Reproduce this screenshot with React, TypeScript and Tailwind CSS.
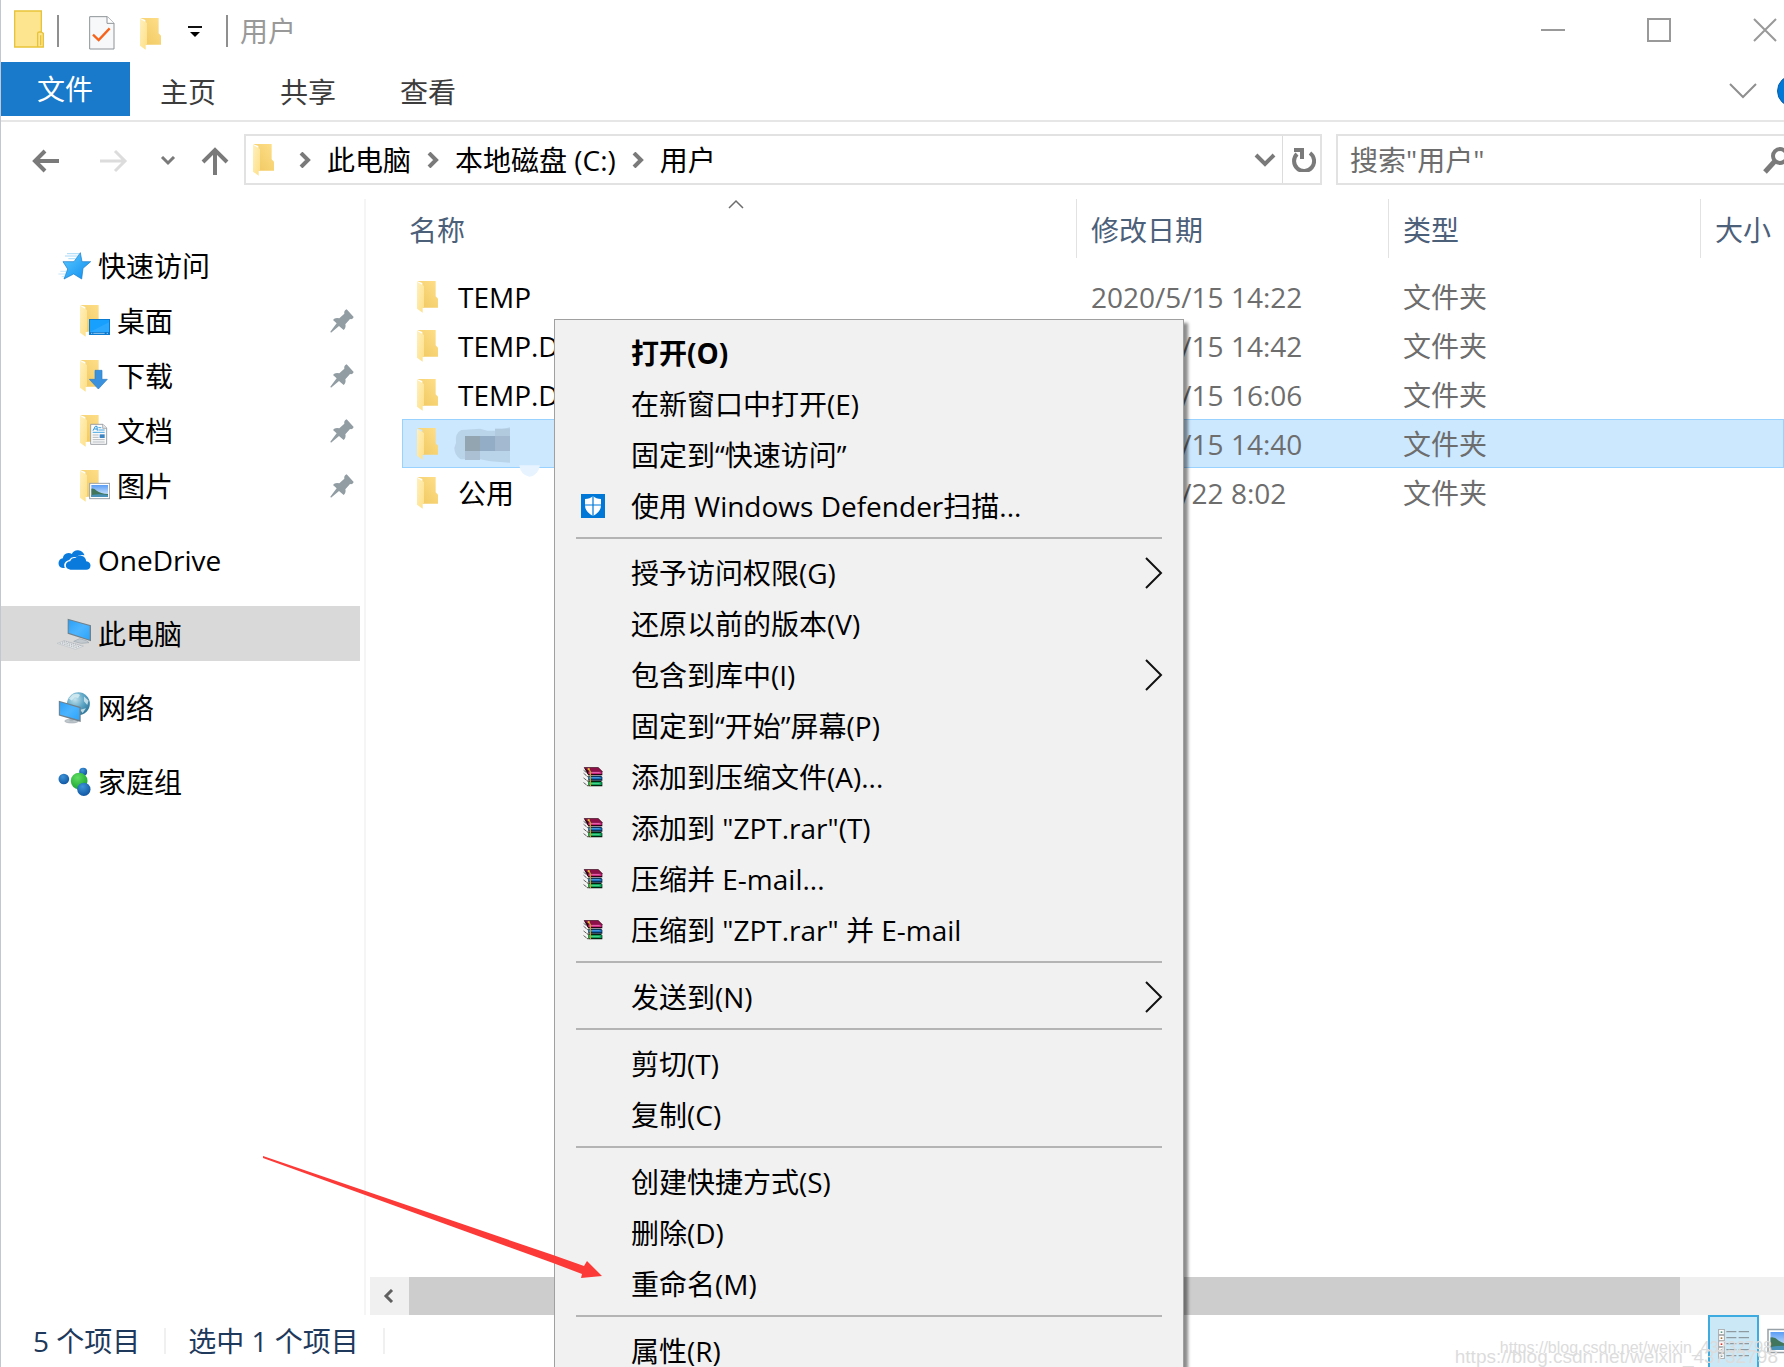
import type { ReactNode } from "react";
import clsx from "clsx";

type Entry = {
  name: string;
  date: string;
  selected?: boolean;
  masked?: boolean;
};

type MenuItem = {
  label: string;
  icon?: "defender" | "rar";
  bold?: boolean;
  submenu?: boolean;
};

const entries: Entry[] = [
  { name: "TEMP", date: "2020/5/15 14:22" },
  { name: "TEMP.D", date: "2020/5/15 14:42" },
  { name: "TEMP.D", date: "2020/5/15 16:06" },
  { name: "", date: "2020/5/15 14:40", selected: true, masked: true },
  { name: "公用", date: "2020/5/22 8:02" },
];

const menuGroups: MenuItem[][] = [
  [
    { label: "打开(O)", bold: true },
    { label: "在新窗口中打开(E)" },
    { label: "固定到“快速访问”" },
    { label: "使用 Windows Defender扫描...", icon: "defender" },
  ],
  [
    { label: "授予访问权限(G)", submenu: true },
    { label: "还原以前的版本(V)" },
    { label: "包含到库中(I)", submenu: true },
    { label: "固定到“开始”屏幕(P)" },
    { label: "添加到压缩文件(A)...", icon: "rar" },
    { label: '添加到 "ZPT.rar"(T)', icon: "rar" },
    { label: "压缩并 E-mail...", icon: "rar" },
    { label: '压缩到 "ZPT.rar" 并 E-mail', icon: "rar" },
  ],
  [{ label: "发送到(N)", submenu: true }],
  [{ label: "剪切(T)" }, { label: "复制(C)" }],
  [{ label: "创建快捷方式(S)" }, { label: "删除(D)" }, { label: "重命名(M)" }],
  [{ label: "属性(R)" }],
];

/* shared gradients, referenced by id from the icons below */
function Gradients() {
  return (
    <svg className="absolute size-0" aria-hidden>
      <defs>
        <linearGradient id="folderBack" x1="0" y1="1" x2="1" y2="0">
          <stop offset="0" stopColor="#f0c75e" />
          <stop offset="1" stopColor="#fedf8a" />
        </linearGradient>
        <linearGradient id="folderFlap" x1="0" y1="0" x2="1" y2="1">
          <stop offset="0" stopColor="#fff0bd" />
          <stop offset="1" stopColor="#fddf86" />
        </linearGradient>
        <linearGradient id="screen" x1="0" y1="0" x2="1" y2="1">
          <stop offset="0" stopColor="#2c9ff5" />
          <stop offset="0.5" stopColor="#4db5ff" />
          <stop offset="1" stopColor="#2ba4fb" />
        </linearGradient>
        <linearGradient id="star" x1="0" y1="0" x2="1" y2="1">
          <stop offset="0" stopColor="#5ccbff" />
          <stop offset="1" stopColor="#0d8cf0" />
        </linearGradient>
        <radialGradient id="globe" cx="0.35" cy="0.3" r="0.8">
          <stop offset="0" stopColor="#c3e2ec" />
          <stop offset="0.5" stopColor="#5fa7c6" />
          <stop offset="1" stopColor="#276f95" />
        </radialGradient>
        <radialGradient id="blueBall" cx="0.4" cy="0.3" r="0.8">
          <stop offset="0" stopColor="#3c93d8" />
          <stop offset="1" stopColor="#0b4f9c" />
        </radialGradient>
        <radialGradient id="greenBall" cx="0.4" cy="0.3" r="0.8">
          <stop offset="0" stopColor="#5fdc62" />
          <stop offset="1" stopColor="#12a02a" />
        </radialGradient>
        <linearGradient id="sky" x1="0" y1="0" x2="0" y2="1">
          <stop offset="0" stopColor="#5b9df5" />
          <stop offset="1" stopColor="#e4f3fd" />
        </linearGradient>
      </defs>
    </svg>
  );
}

function FolderShape() {
  return (
    <>
      <path d="M0 0H56V46L63 53V80H16V6Z" fill="url(#folderBack)" />
      <path d="M0 2L21 15V79L17 80V95L0 83Z" fill="url(#folderFlap)" />
    </>
  );
}

function FolderIcon() {
  return (
    <svg className="h-8 w-[22px] shrink-0" viewBox="0 0 66 96" aria-hidden>
      <FolderShape />
    </svg>
  );
}

function BadgedFolder({ children }: { children: ReactNode }) {
  return (
    <svg className="h-8 w-[30px]" viewBox="0 0 90 96" aria-hidden>
      <FolderShape />
      {children}
    </svg>
  );
}

function DesktopIcon() {
  return (
    <BadgedFolder>
      <rect x="27" y="42" width="63" height="48" fill="#0b7ad1" />
      <rect x="30" y="45" width="57" height="36" fill="#18a0ff" />
      <path d="M30 81L87 52V81Z" fill="#3fb1ff" opacity="0.5" />
      <path d="M33 85h4M40 85h34M80 85h4" stroke="#e6f4ff" strokeWidth="2" />
    </BadgedFolder>
  );
}

function DownloadsIcon() {
  return (
    <BadgedFolder>
      <path d="M45 31H66V58H82L55 87L28 58H45Z" fill="#3a92df" stroke="#2c7cc6" strokeWidth="2" />
    </BadgedFolder>
  );
}

function DocumentsIcon() {
  return (
    <BadgedFolder>
      <path d="M32 28H69L80 39V88H32Z" fill="#fbfbfb" stroke="#8c9196" strokeWidth="2.5" />
      <path d="M68 28V40H80" fill="#e4e6e8" stroke="#8c9196" strokeWidth="2" />
      <path d="M39 47L46 34H51L52 47M43 42H51" fill="none" stroke="#2594dd" strokeWidth="3" />
      <path d="M55 38H64M55 45H74M38 52H74" stroke="#2594dd" strokeWidth="2.5" />
      <path d="M38 60H56M38 67H56M38 74H74M38 81H74" stroke="#a5abb1" strokeWidth="2.5" />
      <rect x="59" y="58" width="15" height="11" fill="#3e85c4" />
    </BadgedFolder>
  );
}

function PhotoShape() {
  return (
    <>
      <rect x="29" y="40" width="60" height="46" fill="#fff" stroke="#98a1a8" strokeWidth="3" />
      <rect x="34" y="45" width="50" height="36" fill="url(#sky)" />
      <path d="M34 56Q42 54 50 62Q62 70 84 72V81H34Z" fill="#41765c" />
      <path d="M34 75Q58 70 84 75V81H34Z" fill="#4a91b8" />
    </>
  );
}

function PicturesIcon() {
  return (
    <BadgedFolder>
      <PhotoShape />
    </BadgedFolder>
  );
}

function QuickAccessIcon() {
  return (
    <svg className="h-7 w-[34px]" viewBox="0 0 102 84" aria-hidden>
      <path
        d="M70 2L75 29H101L78 49L74 81L50 66L21 81L32 51L18 29H51Z"
        fill="url(#star)"
        stroke="#1479c9"
        strokeWidth="2"
      />
      <path d="M30 5H66M24 12H62M34 20H56" stroke="#7cc6f3" strokeWidth="2" />
      <path d="M4 66H26M10 58H28M14 74H22" stroke="#a9d9f7" strokeWidth="2" />
    </svg>
  );
}

function OneDriveIcon() {
  return (
    <svg className="h-5 w-[33px]" viewBox="0 0 98 60" aria-hidden>
      <path
        d="M20 54H14Q1 52 1 39Q2 27 14 25Q16 10 31 9Q37 9 41 12Q47 0 60 1Q74 2 79 16Q64 12 54 22Q40 18 33 30Q20 34 18 44Q18 50 20 54Z"
        fill="#0a7bdc"
      />
      <path
        d="M37 59Q23 57 23 46Q24 35 36 34Q40 22 52 24Q60 14 72 18Q83 22 84 34Q97 36 97 47Q96 59 84 59Z"
        fill="#0a7bdc"
      />
    </svg>
  );
}

function ComputerIcon() {
  return (
    <svg className="h-8 w-9" viewBox="0 0 106 96" aria-hidden>
      <path d="M2 76L24 68L82 84L58 94Z" fill="#e4e7e9" stroke="#b5bbc0" strokeWidth="1.5" />
      <path
        d="M10 75L64 90M17 72L71 87M22 69L78 84"
        stroke="#a3abb1"
        strokeWidth="2.5"
        strokeDasharray="4 3"
      />
      <path d="M52 70Q72 80 98 74L90 68L70 62Z" fill="#c4cbd0" stroke="#8f9aa2" strokeWidth="1.5" />
      <path d="M34 2L104 22V70L34 47Z" fill="#71808a" />
      <path d="M37 6L100 24V65L37 44Z" fill="url(#screen)" />
    </svg>
  );
}

function NetworkIcon() {
  return (
    <svg className="h-8 w-[33px]" viewBox="0 0 98 98" aria-hidden>
      <circle cx="61" cy="36" r="35" fill="url(#globe)" />
      <path
        d="M44 8Q58 2 66 9L60 18L50 16L40 26L32 20ZM78 14L92 26L88 40L78 28ZM66 54L84 50L74 64Z"
        fill="#d9edf2"
        opacity="0.8"
      />
      <ellipse cx="40" cy="89" rx="21" ry="6" fill="#bfc8cd" stroke="#8f9aa2" strokeWidth="1.5" />
      <path d="M34 76H46V90H34Z" fill="#a9b4ba" />
      <path d="M1 27L68 46V92L1 72Z" fill="#71808a" />
      <path d="M4 31L64 49V86L4 69Z" fill="url(#screen)" />
    </svg>
  );
}

function HomegroupIcon() {
  return (
    <svg className="h-[30px] w-[33px]" viewBox="0 0 98 90" aria-hidden>
      <circle cx="17" cy="36" r="16" fill="url(#blueBall)" />
      <circle cx="75" cy="14" r="12" fill="url(#blueBall)" />
      <circle cx="63" cy="42" r="25" fill="url(#greenBall)" />
      <circle cx="77" cy="67" r="20" fill="url(#blueBall)" />
    </svg>
  );
}

function PinIcon() {
  return (
    <svg className="size-6" viewBox="0 0 72 72" aria-hidden>
      <path
        d="M50 1L71 24Q69 32 60 30L46 46Q49 56 41 63L27 51L3 71L1 68L20 43L9 33Q14 25 28 28L43 14Q41 5 50 1Z"
        fill="#919ca3"
      />
    </svg>
  );
}

function DefenderIcon() {
  return (
    <svg className="size-6" viewBox="0 0 24 24" aria-hidden>
      <rect width="24" height="24" fill="#0078d7" />
      <path d="M12 2Q15 5 20 5V11Q20 18 12 22Q4 18 4 11V5Q9 5 12 2Z" fill="#fff" />
      <path d="M12 2V22M3 11H21" stroke="#0078d7" strokeWidth="1.2" />
    </svg>
  );
}

function RarIcon() {
  return (
    <svg className="size-5" viewBox="0 0 60 60" aria-hidden>
      {/* page edges */}
      <path d="M2 4L16 14V58L2 48Z" fill="#f4f4f4" />
      <path d="M2 10L16 21M2 19L16 31M2 33L16 44M2 47L16 58" stroke="#2a2a2a" strokeWidth="3" strokeDasharray="4 2" />
      {/* covers */}
      <path d="M2 1H46L58 13V25H16Z" fill="#2b0313" />
      <path d="M4 2H46L56 12H16Z" fill="#8e1048" />
      <path d="M16 13H56V21H16Z" fill="#c9287f" />
      <path d="M22 16H50V18H22Z" fill="#f07cb8" />
      <path d="M16 26H54L58 30V41H16Z" fill="#04182f" />
      <path d="M16 29H56V37H16Z" fill="#1c6fb8" />
      <path d="M22 31H50V33H22Z" fill="#59acec" />
      <path d="M16 42H54L58 46V58H16Z" fill="#03230f" />
      <path d="M16 45H56V54H16Z" fill="#12a35a" />
      <path d="M22 48H50V50H22Z" fill="#5fe6a0" />
      {/* strap */}
      <path d="M16 5L22 14V57" fill="none" stroke="#c9a21f" strokeWidth="4" />
      <path d="M14 4H20V8H14Z" fill="#f2dc3a" />
    </svg>
  );
}

/* pixelated smear that hides the name of the selected folder */
function MaskedName() {
  return (
    <svg className="absolute top-[7px] left-[52px] h-[52px] w-[90px]" viewBox="0 0 270 156" aria-hidden>
      <path
        d="M22 12L78 8L100 14L124 14L168 4V110L110 106L78 100L20 100Q1 88 1 66L6 50Q2 22 22 12Z"
        fill="#b9d3e8"
      />
      <rect x="33" y="75" width="45" height="27" fill="#abc0d2" />
      <rect x="123" y="8" width="45" height="22" fill="#b1cade" />
      <rect x="33" y="30" width="45" height="45" fill="#94a5b2" />
      <rect x="78" y="30" width="45" height="45" fill="#93adc7" />
      <rect x="123" y="30" width="45" height="45" fill="#a3b9cf" />
      <path d="M196 118H258Q252 150 226 152Q200 148 196 118Z" fill="#e7f3fe" />
    </svg>
  );
}

function Chevron({ direction }: { direction: "right" | "down" }) {
  return direction === "right" ? (
    <svg className="h-4 w-3 shrink-0" viewBox="0 0 12 16" aria-hidden>
      <path d="M2 1L9 8L2 15" fill="none" stroke="#7a7a7a" strokeWidth="4" />
    </svg>
  ) : (
    <svg className="h-[14px] w-[22px]" viewBox="0 0 22 14" aria-hidden>
      <path d="M2 2L11 11L20 2" fill="none" stroke="#7a7a7a" strokeWidth="4" />
    </svg>
  );
}

function TitleBar() {
  return (
    <header className="flex h-[62px] shrink-0 items-center pl-[13px]">
      <svg className="-mt-1 h-[38px] w-[30px]" viewBox="0 0 90 114" aria-hidden>
        <path d="M2 3H82V66L88 70V111H2Z" fill="#fde48f" stroke="#e8c33a" strokeWidth="4" />
        <path d="M71 111V70Q71 66 76 66H84M80 76V106" fill="none" stroke="#e8c33a" strokeWidth="4" />
      </svg>
      <span className="ml-[13px] h-8 w-[2px] bg-[#8f8f8f]" />
      <button type="button" aria-label="属性" className="ml-[30px]">
        <svg className="mt-1 h-[34px] w-[26px]" viewBox="0 0 78 102" aria-hidden>
          <path d="M2 2H55L75 22V99H2Z" fill="#f7f8f9" stroke="#8e9397" strokeWidth="3" />
          <path d="M54 2V22H75" fill="#fff" stroke="#8e9397" strokeWidth="3" />
          <path d="M12 56L29 72L62 37" fill="none" stroke="#f7631b" strokeWidth="7" />
        </svg>
      </button>
      <button type="button" aria-label="新建文件夹" className="mt-[6px] ml-[25px]">
        <FolderIcon />
      </button>
      <button type="button" aria-label="自定义快速访问工具栏" className="mt-[2px] ml-[26px]">
        <svg className="h-3 w-[14px]" viewBox="0 0 14 12" aria-hidden>
          <path d="M0 1H14" stroke="#111" strokeWidth="2" />
          <path d="M2 6H12L7 11Z" fill="#000" />
        </svg>
      </button>
      <span className="ml-6 h-8 w-[2px] bg-[#8f8f8f]" />
      <h1 className="ml-3 text-[#999]">用户</h1>
      <div className="ml-auto flex items-center gap-[82px] pr-[7px] pb-[3px]">
        <button type="button" aria-label="最小化" className="flex h-6 w-6 items-center">
          <span className="h-[2px] w-full bg-[#999]" />
        </button>
        <button type="button" aria-label="最大化" className="h-6 w-6 border-2 border-[#999]" />
        <button type="button" aria-label="关闭">
          <svg className="size-6" viewBox="0 0 24 24" aria-hidden>
            <path d="M1 1L23 23M23 1L1 23" stroke="#999" strokeWidth="2" />
          </svg>
        </button>
      </div>
    </header>
  );
}

function Ribbon() {
  return (
    <div className="flex h-[60px] shrink-0 items-start border-b-2 border-[#e6e6e6]">
      <button type="button" className="-ml-px h-[54px] w-[130px] bg-[#1979ca] text-white">
        文件
      </button>
      <div className="-ml-[2px] flex">
        {["主页", "共享", "查看"].map((tab) => (
          <button key={tab} type="button" className="h-[60px] w-[120px] text-[#3c3c3c]">
            {tab}
          </button>
        ))}
      </div>
      <div className="-mr-[25px] ml-auto flex h-[58px] items-center gap-5">
        <button type="button" aria-label="展开功能区">
          <svg className="h-4 w-7" viewBox="0 0 28 16" aria-hidden>
            <path d="M1 1L14 14L27 1" fill="none" stroke="#8f8f8f" strokeWidth="2" />
          </svg>
        </button>
        <button type="button" aria-label="帮助" className="size-8 rounded-full border border-[#0a5ea8] bg-[#0078d7]" />
      </div>
    </div>
  );
}

function AddressRow() {
  return (
    <div className="flex h-[77px] shrink-0 items-start pt-3 pl-[31px]">
      <div className="flex h-[54px] items-center">
        <button type="button" aria-label="后退">
          <svg className="h-6 w-7" viewBox="0 0 28 24" aria-hidden>
            <path d="M27 12H4M13 2L3 12L13 22" fill="none" stroke="#7a7a7a" strokeWidth="4" />
          </svg>
        </button>
        <button type="button" aria-label="前进" className="ml-10">
          <svg className="h-6 w-7" viewBox="0 0 28 24" aria-hidden>
            <path d="M0 12H24M15 2L25 12L15 22" fill="none" stroke="#dcdcdc" strokeWidth="3" />
          </svg>
        </button>
        <button type="button" aria-label="最近浏览的位置" className="ml-8">
          <svg className="h-[10px] w-4" viewBox="0 0 16 10" aria-hidden>
            <path d="M2 1L8 7L14 1" fill="none" stroke="#7a7a7a" strokeWidth="3" />
          </svg>
        </button>
        <button type="button" aria-label="上移" className="ml-[25px]">
          <svg className="h-[30px] w-7" viewBox="0 0 28 30" aria-hidden>
            <path d="M14 29V4M2 16L14 4L26 16" fill="none" stroke="#7a7a7a" strokeWidth="4" />
          </svg>
        </button>
      </div>
      <div className="ml-[15px] flex h-[51px] min-w-0 flex-1 items-center border-2 border-[#e2e2e2] pl-[7px]">
        <FolderIcon />
        <nav aria-label="地址" className="ml-6 flex items-center gap-4 whitespace-nowrap text-black">
          {["此电脑", "本地磁盘 (C:)", "用户"].map((part) => (
            <span key={part} className="flex items-center gap-4">
              <Chevron direction="right" />
              <a href="#">{part}</a>
            </span>
          ))}
        </nav>
        <button type="button" aria-label="以前的位置" className="mr-[6px] ml-auto">
          <Chevron direction="down" />
        </button>
        <button
          type="button"
          aria-label="刷新"
          className="flex h-full w-[38px] items-center justify-center border-l border-[#dcdcdc] pl-1"
        >
          <svg className="size-6" viewBox="0 0 24 24" aria-hidden>
            <path d="M18 5A10 10 0 1 1 5 6" fill="none" stroke="#7a7a7a" strokeWidth="4" />
            <path d="M2 0H12V11H8V4H2Z" fill="#7a7a7a" />
          </svg>
        </button>
      </div>
      <label className="ml-[14px] flex h-[51px] w-[448px] shrink-0 items-center border-2 border-r-0 border-[#e2e2e2] pl-3">
        <input
          type="search"
          aria-label="搜索"
          placeholder={'搜索"用户"'}
          className="min-w-0 flex-1 outline-none placeholder:text-[#6d6d6d]"
        />
        <svg className="-mr-[7px] h-7 w-7 shrink-0" viewBox="0 0 28 28" aria-hidden>
          <circle cx="17" cy="10" r="7" fill="none" stroke="#7a7a7a" strokeWidth="4" />
          <path d="M12 15L2 26" stroke="#7a7a7a" strokeWidth="5" />
        </svg>
      </label>
    </div>
  );
}

function SideItem({
  icon,
  label,
  pinned,
  selected,
  spaced,
}: {
  icon: ReactNode;
  label: string;
  pinned?: boolean;
  selected?: boolean;
  spaced?: boolean;
}) {
  return (
    <li className={clsx("mr-1", spaced && "mt-[19px]")}>
      <a
        href="#"
        className={clsx(
          "flex h-[55px] items-center",
          pinned ? "gap-[7px] pl-[79px]" : "gap-[6px] pl-[55px]",
          selected && "bg-[#d9d9d9]",
        )}
      >
        <span className={clsx("flex shrink-0 justify-center", pinned ? "w-[30px]" : "w-9")}>{icon}</span>
        <span>{label}</span>
        {pinned ? (
          <span className="mr-[6px] ml-auto">
            <PinIcon />
          </span>
        ) : null}
      </a>
    </li>
  );
}

function Sidebar() {
  return (
    <aside className="w-[365px] shrink-0 border-r-2 border-[#f5f5f5] pt-[39px] text-black">
      <ul>
        <SideItem icon={<QuickAccessIcon />} label="快速访问" />
        <SideItem icon={<DesktopIcon />} label="桌面" pinned />
        <SideItem icon={<DownloadsIcon />} label="下载" pinned />
        <SideItem icon={<DocumentsIcon />} label="文档" pinned />
        <SideItem icon={<PicturesIcon />} label="图片" pinned />
        <SideItem icon={<OneDriveIcon />} label="OneDrive" spaced />
        <SideItem icon={<ComputerIcon />} label="此电脑" spaced selected />
        <SideItem icon={<NetworkIcon />} label="网络" spaced />
        <SideItem icon={<HomegroupIcon />} label="家庭组" spaced />
      </ul>
    </aside>
  );
}

function FileTable() {
  const headers = ["名称", "修改日期", "类型", "大小"];
  return (
    <table className="w-full table-fixed border-collapse text-left whitespace-nowrap">
      <colgroup>
        <col className="w-[675px]" />
        <col className="w-[312px]" />
        <col className="w-[312px]" />
        <col />
      </colgroup>
      <thead>
        <tr>
          {headers.map((header, i) => (
            <th key={header} scope="col" className="relative h-[73px] p-0 align-top font-normal text-[#4c607a]">
              <div
                className={clsx(
                  "flex h-[59px] items-center pt-[2px]",
                  i === 0 ? "pl-[7px]" : "pl-[14px]",
                  i < 3 && "border-r border-[#e2e2e2]",
                )}
              >
                {header}
              </div>
              {i === 0 ? (
                <svg className="absolute top-0 left-[326px] h-[10px] w-4" viewBox="0 0 16 10" aria-hidden>
                  <path d="M1 9L8 2L15 9" fill="none" stroke="#6d6d6d" strokeWidth="1.5" />
                </svg>
              ) : null}
            </th>
          ))}
        </tr>
      </thead>
      <tbody>
        {entries.map((entry) => (
          <tr
            key={entry.date}
            className={clsx("h-[49px]", entry.selected && "bg-[#cce8ff] outline outline-[#99d1ff] -outline-offset-1")}
          >
            <td className="relative p-0 pl-[15px]">
              <div className="flex items-center gap-[19px] text-black">
                <FolderIcon />
                {entry.masked ? <MaskedName /> : entry.name}
              </div>
            </td>
            <td className="p-0 pl-[14px] text-[#6d6d6d]">{entry.date}</td>
            <td className="p-0 pl-[14px] text-[#6d6d6d]">文件夹</td>
            <td className="p-0" />
          </tr>
        ))}
      </tbody>
    </table>
  );
}

function ScrollBar() {
  return (
    <div className="ml-1 flex h-[38px] shrink-0 bg-[#f0f0f0]">
      <button type="button" aria-label="向左滚动" className="flex w-[39px] items-center justify-center pr-1">
        <svg className="h-[14px] w-3" viewBox="0 0 12 14" aria-hidden>
          <path d="M10 1L4 7L10 13" fill="none" stroke="#606060" strokeWidth="3" />
        </svg>
      </button>
      <div className="mr-[104px] flex-1 bg-[#cdcdcd]" />
    </div>
  );
}

function StatusBar() {
  return (
    <footer className="flex h-[52px] shrink-0 items-center pl-8 whitespace-nowrap text-[#1e395b]">
      <span>5 个项目</span>
      <span className="ml-6 h-[26px] w-[2px] bg-[#f0f0f0]" />
      <span className="ml-[22px]">选中 1 个项目</span>
      <span className="ml-6 h-[26px] w-[2px] bg-[#f0f0f0]" />
      <div className="-mr-[15px] ml-auto flex h-full items-center gap-2">
        <button
          type="button"
          aria-label="详细信息"
          className="flex h-full w-[51px] items-center justify-center border-2 border-b-0 border-[#3dabe0] bg-[#cbe8f6] pt-1"
        >
          <svg className="h-[30px] w-8" viewBox="0 0 96 90" aria-hidden>
            {[0, 18, 36, 54, 72].map((y, i) => (
              <g key={y}>
                <rect x="2" y={y + 1} width="17" height="16" fill="#fff" stroke="#a7a7a7" strokeWidth="3" />
                <rect x="8" y={y + 7} width="5" height="5" fill={["#5a9a8a", "#a3743d", "#d9352a", "#8a8a5a", "#3a8a9a"][i]} />
                <path d={`M25 ${y + 8}H55M62 ${y + 8}H93`} stroke="#8f9aa0" strokeWidth="4" />
              </g>
            ))}
          </svg>
        </button>
        <button type="button" aria-label="大缩略图">
          <svg className="h-[26px] w-8" viewBox="27 38 64 50" aria-hidden>
            <PhotoShape />
          </svg>
        </button>
      </div>
    </footer>
  );
}

function ContextMenu() {
  return (
    <div
      role="menu"
      className="absolute top-[319px] left-[553px] w-[630px] border border-[#a0a0a0] bg-[#f1f1f1] pt-[7px] pb-2 text-black shadow-[4px_4px_3px_rgba(0,0,0,0.45)]"
    >
      {menuGroups.map((group, g) => (
        <div key={group[0].label}>
          {g > 0 ? <hr className="mx-[21px] mt-[6px] mb-2 h-[2px] border-0 bg-[#b4b4b4]" /> : null}
          {group.map((item) => (
            <button
              key={item.label}
              type="button"
              role="menuitem"
              className="flex h-[51px] w-full items-center pr-5 text-left whitespace-nowrap"
            >
              <span className="flex w-[76px] shrink-0 justify-center">
                {item.icon === "defender" ? <DefenderIcon /> : null}
                {item.icon === "rar" ? <RarIcon /> : null}
              </span>
              <span className={clsx(item.bold && "font-bold")}>{item.label}</span>
              {item.submenu ? (
                <svg className="ml-auto h-8 w-[18px]" viewBox="0 0 18 32" aria-hidden>
                  <path d="M1 1L16 16L1 31" fill="none" stroke="#111" strokeWidth="2" />
                </svg>
              ) : null}
            </button>
          ))}
        </div>
      ))}
    </div>
  );
}

export default function App() {
  return (
    <div className="relative flex h-screen flex-col overflow-hidden border-l border-[#c3c7d3] bg-white font-['Open_Sans','Noto_Sans_CJK_SC',sans-serif] text-[28px] leading-9">
      <Gradients />
      <TitleBar />
      <Ribbon />
      <AddressRow />
      <div className="flex min-h-0 flex-1">
        <Sidebar />
        <main className="flex min-w-0 flex-1 flex-col">
          <div className="min-h-0 flex-1 overflow-hidden pl-9">
            <FileTable />
          </div>
          <ScrollBar />
        </main>
      </div>
      <StatusBar />
      <ContextMenu />

      <svg
        className="pointer-events-none absolute top-[1156px] left-[261px] h-[124px] w-[342px]"
        viewBox="0 0 342 124"
        aria-hidden
      >
        <path d="M1 0L291 99L322 110L325 105L340 120L319 122L320 118L291 107L1 2Z" fill="#fc3a38" />
      </svg>

      <div className="pointer-events-none absolute right-3 bottom-[7px] font-['Liberation_Sans',sans-serif] text-base leading-6 text-[#dcdcdc]">
        https://blog.csdn.net/weixin_43732798
      </div>
      <div className="pointer-events-none absolute right-[6px] -bottom-[2px] font-['Liberation_Sans',sans-serif] text-[19px] leading-6 text-[#dcdcdc]">
        https://blog.csdn.net/weixin_43732798
      </div>
    </div>
  );
}
